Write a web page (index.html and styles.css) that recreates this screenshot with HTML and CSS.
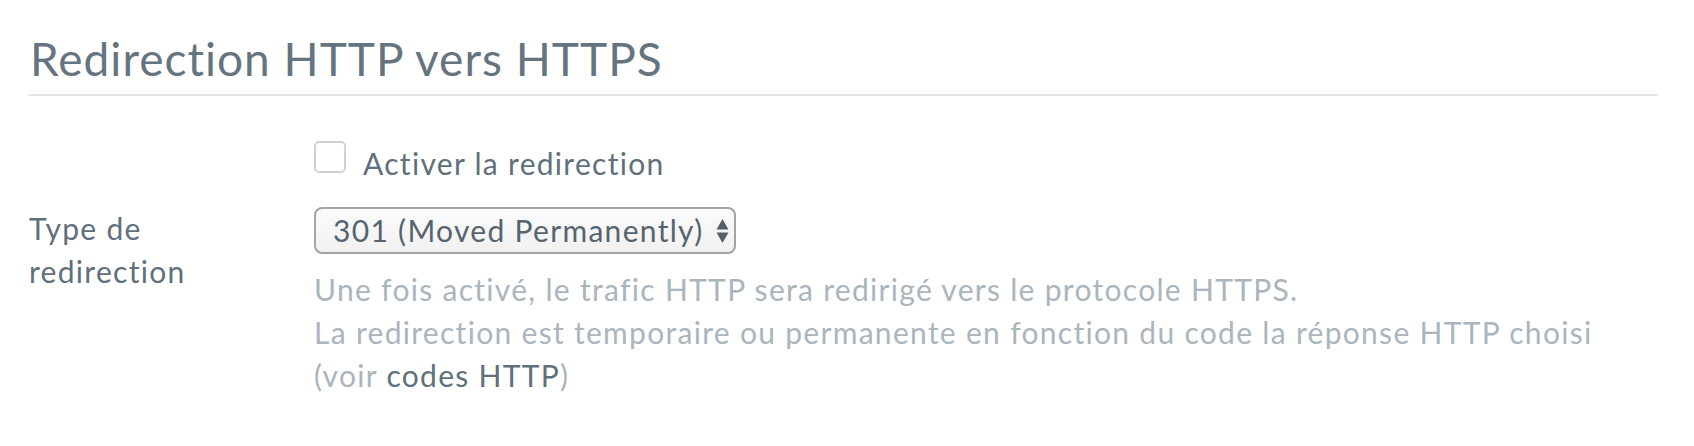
FILE: index.html
```html
<!DOCTYPE html>
<html lang="fr">
<head>
<meta charset="utf-8">
<title>Redirection HTTP vers HTTPS</title>
<link rel="stylesheet" href="styles.css">
</head>
<body>
<section class="panel">
  <h2 class="panel-title">Redirection HTTP vers HTTPS</h2>
  <div class="form">
    <div class="row row-check">
      <div class="label"></div>
      <div class="field">
        <label class="check">
          <span class="check-box"></span>
          <span class="check-text">Activer la redirection</span>
        </label>
      </div>
    </div>
    <div class="row">
      <div class="label">Type de<br>redirection</div>
      <div class="field">
        <div class="select">
          <span class="select-value">301 (Moved Permanently)</span>
          <svg class="select-arrows" width="13" height="28" viewBox="0 0 13 28">
            <path d="M6.5 2 L12.5 12.5 L0.5 12.5 Z" fill="#55606a"/>
            <path d="M0.5 15.5 L12.5 15.5 L6.5 26 Z" fill="#55606a"/>
          </svg>
        </div>
        <p class="help">Une fois activé, le trafic HTTP sera redirigé vers le protocole HTTPS.<br>La redirection est temporaire ou permanente en fonction du code la réponse HTTP choisi<br>(voir <a class="link" href="#">codes HTTP</a>)</p>
      </div>
    </div>
  </div>
</section>
</body>
</html>
```
FILE: styles.css
```css
html, body {
  margin: 0;
  padding: 0;
  background: #ffffff;
}
body {
  font-family: Lato, "Noto Sans", sans-serif;
  color: #5f6f7b;
}
.panel {
  padding: 31px 36px 0 28px;
}
.panel-title {
  margin: 0;
  padding: 0 0 8px 2px;
  font-size: 46px;
  font-weight: 400;
  line-height: 55px;
  letter-spacing: 1px;
  color: #65747f;
  border-bottom: 2px solid #e6e6e6;
}
.form {
  padding-top: 46px;
  display: flex;
  flex-direction: column;
  gap: 22px;
}
.row {
  display: flex;
  font-size: 30px;
  line-height: 43px;
  letter-spacing: 1.3px;
}
.label {
  width: 285px;
  flex: none;
  padding-left: 1px;
}
.field {
  flex: 1;
}
.check {
  display: flex;
  align-items: flex-start;
  gap: 17px;
}
.check-box {
  width: 28px;
  height: 28px;
  margin-top: -1px;
  border: 2px solid #d2d2d2;
  border-radius: 5px;
  background: #fff;
  flex: none;
}
.select {
  display: inline-flex;
  align-items: center;
  gap: 12px;
  height: 43px;
  padding: 0 5px 0 17px;
  border: 2px solid #a4a4a4;
  border-radius: 8px;
  background: linear-gradient(#fbfbfb, #f1f1f1);
  color: #56646f;
}
.select-arrows {
  display: block;
}
.help {
  margin: 14px 0 0;
  color: #aab5bd;
}
.help br + * {
  letter-spacing: inherit;
}
.link {
  color: #5f6f7b;
  text-decoration: none;
}
```
